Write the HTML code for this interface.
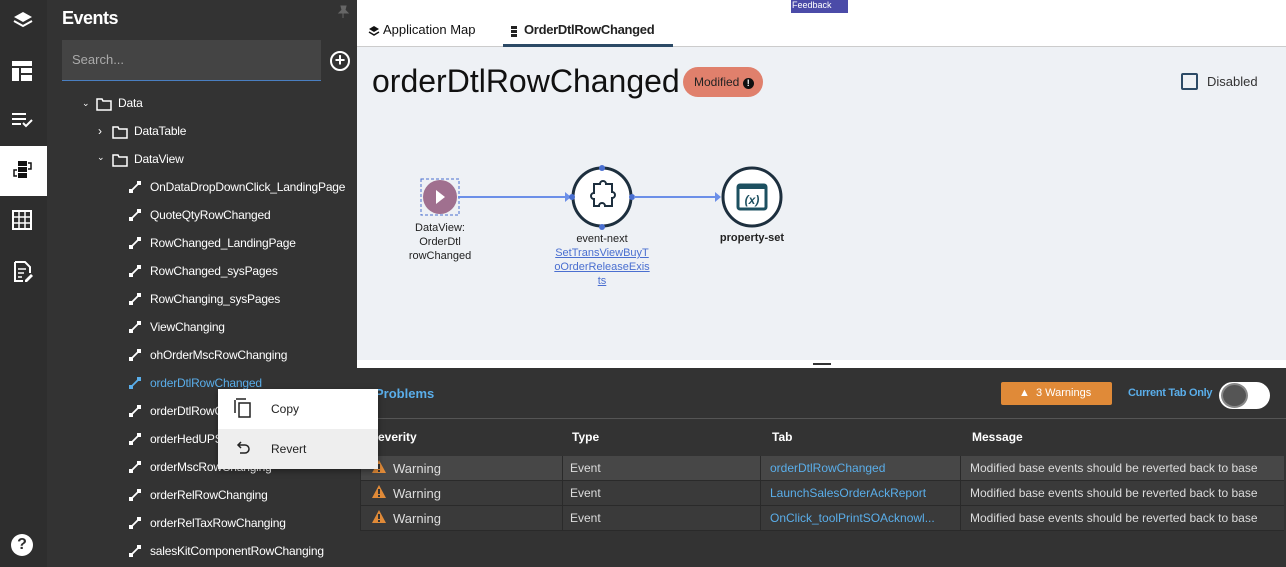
<!DOCTYPE html>
<html><head><style>
*{margin:0;padding:0;box-sizing:border-box}
html,body{width:1286px;height:567px;overflow:hidden;background:#eef1f5}
body{position:relative;font-family:"Liberation Sans",sans-serif}
.abs{position:absolute}
.rail{left:0;top:0;width:47px;height:567px;background:#2e2e2e}
.panel{left:47px;top:0;width:310px;height:567px;background:#333}
.tree div{position:absolute;color:#fff;font-size:12px;height:16px;line-height:16px;letter-spacing:-0.2px}
.lnk{position:absolute;width:12px;height:12px}
.top{left:357px;top:0;width:929px;height:47px;background:#fff;border-bottom:1px solid #ccc}
.bottom{left:357px;top:368px;width:929px;height:199px;background:#333}
.cell{position:absolute;font-size:12px;color:#ddd;line-height:24px;padding-left:10px}
</style></head><body>
<div class="abs" style="left:357px;top:47px;width:929px;height:313px;background:#eef1f5"></div>
<div class="abs rail"></div>
<svg class="abs" style="left:12px;top:10px" width="22" height="22" viewBox="0 0 22 22"><path d="M11 2 L20 7 L11 12 L2 7Z" fill="#fff"/><path d="M2 11 L11 16 L20 11" stroke="#fff" stroke-width="2" fill="none"/></svg>
<svg class="abs" style="left:12px;top:61px" width="20" height="20"><rect x="0" y="0" width="20" height="5" fill="#fff"/><rect x="0" y="7" width="7" height="13" fill="#fff"/><rect x="9" y="7" width="11" height="5" fill="#fff"/><rect x="9" y="14" width="11" height="6" fill="#fff"/></svg>
<svg class="abs" style="left:12px;top:113px" width="22" height="16"><rect x="0" y="0" width="14" height="2" fill="#fff"/><rect x="0" y="5" width="14" height="2" fill="#fff"/><rect x="0" y="10" width="9" height="2" fill="#fff"/><path d="M11 10 l3 3 l6-6" stroke="#fff" stroke-width="2" fill="none"/></svg>
<div class="abs" style="left:0;top:146px;width:47px;height:50px;background:#fff"></div>
<svg class="abs" style="left:12px;top:159px" width="22" height="22"><rect x="6" y="2" width="9" height="5" fill="#111"/><rect x="6" y="8" width="9" height="5" fill="#111"/><rect x="6" y="14" width="9" height="5" fill="#111"/><path d="M16 4 h3 v6 h-3 M5 11 h-3 v6 h3" stroke="#111" stroke-width="1.5" fill="none"/></svg>
<svg class="abs" style="left:12px;top:210px" width="20" height="20"><rect x="1" y="1" width="18" height="18" fill="none" stroke="#fff" stroke-width="2"/><path d="M1 7h18M1 13h18M7 1v18M13 1v18" stroke="#fff" stroke-width="1.5"/></svg>
<svg class="abs" style="left:13px;top:261px" width="20" height="22"><path d="M2 1h10l5 5v6M2 1v19h8" stroke="#fff" stroke-width="2" fill="none"/><path d="M5 8h8M5 12h6M5 16h4" stroke="#fff" stroke-width="1.5"/><path d="M12 19l6-6 2 2-6 6h-2z" fill="#fff"/></svg>
<div class="abs" style="left:11px;top:534px;width:22px;height:22px;border-radius:50%;background:#fff;color:#2e2e2e;font-weight:bold;font-size:16px;text-align:center;line-height:22px">?</div>

<div class="abs panel"></div>
<div class="abs" style="left:62px;top:8px;color:#fff;font-size:18px;font-weight:bold;letter-spacing:-0.5px">Events</div>
<svg class="abs" style="left:336px;top:5px" width="14" height="14"><path d="M5 1h5l-1 4 3 3H3l3-3z M7 8v5" fill="#666" stroke="#666"/></svg>
<div class="abs" style="left:62px;top:40px;width:259px;height:41px;background:#444;border-bottom:1px solid #4a7fc1;color:#aaa;font-size:13px;line-height:40px;padding-left:10px">Search...</div>
<div class="abs" style="left:330px;top:51px;width:20px;height:20px;border:2px solid #fff;border-radius:50%;color:#fff;font-size:18px;line-height:15px;text-align:center;font-weight:bold">+</div>

<div class="tree">
<div style="left:82px;top:95px;font-size:9px">&#8964;</div>
<svg class="abs" style="left:96px;top:98px" width="16" height="13"><path d="M1 1h5l1 2h8v9H1z" fill="none" stroke="#fff" stroke-width="1.5"/></svg>
<div style="left:118px;top:95px">Data</div>
<div style="left:98px;top:123px">&#8250;</div>
<svg class="abs" style="left:112px;top:126px" width="16" height="13"><path d="M1 1h5l1 2h8v9H1z" fill="none" stroke="#fff" stroke-width="1.5"/></svg>
<div style="left:134px;top:123px">DataTable</div>
<div style="left:97px;top:149px;font-size:9px">&#8964;</div>
<svg class="abs" style="left:112px;top:154px" width="16" height="13"><path d="M1 1h5l1 2h8v9H1z" fill="none" stroke="#fff" stroke-width="1.5"/></svg>
<div style="left:134px;top:151px">DataView</div>
</div>
<div id="items" class="tree"></div>

<div class="abs top"></div>
<div class="abs" style="left:791px;top:0;width:57px;height:13px;background:#4b4ba8;color:#fff;font-size:9px;line-height:10px;padding-left:1px">Feedback</div>
<svg class="abs" style="left:368px;top:25px" width="12" height="12"><path d="M6 1l5 3-5 3-5-3z" fill="#111"/><path d="M1 7l5 3 5-3" stroke="#111" stroke-width="1.5" fill="none"/></svg>
<div class="abs" style="left:383px;top:22px;font-size:13px;color:#111">Application Map</div>
<svg class="abs" style="left:509px;top:25px" width="10" height="12"><rect x="2" y="1" width="6" height="3" fill="#222"/><rect x="2" y="5" width="6" height="3" fill="#222"/><rect x="2" y="9" width="6" height="3" fill="#222"/></svg>
<div class="abs" style="left:524px;top:22px;font-size:13px;color:#222;font-weight:bold;letter-spacing:-0.3px">OrderDtlRowChanged</div>
<div class="abs" style="left:503px;top:44px;width:170px;height:3px;background:#2c4a66"></div>

<div class="abs" style="left:372px;top:63px;font-size:32px;color:#111">orderDtlRowChanged</div>
<div class="abs" style="left:683px;top:67px;width:80px;height:30px;border-radius:15px;background:#e0806c;color:#222;font-size:12px;line-height:30px;padding-left:11px">Modified <span style="display:inline-block;width:11px;height:11px;border-radius:50%;background:#111;color:#fff;font-size:9px;line-height:11px;text-align:center;font-weight:bold">!</span></div>
<div class="abs" style="left:1181px;top:73px;width:17px;height:17px;border:2px solid #2c4a66;border-radius:2px"></div>
<div class="abs" style="left:1207px;top:74px;font-size:13px;color:#333">Disabled</div>

<svg class="abs" style="left:400px;top:160px" width="400" height="130">
<rect x="21" y="19" width="38" height="36" fill="none" stroke="#4a6fd0" stroke-dasharray="3,2"/>
<circle cx="40" cy="37" r="17" fill="#a0708f"/><path d="M36 30l9 7-9 7z" fill="#fff"/>
<line x1="58" y1="37" x2="168" y2="37" stroke="#6b8fe8" stroke-width="2"/><path d="M165 32l6 5-6 5z" fill="#6b8fe8"/>
<circle cx="202" cy="37" r="29" fill="#fff" stroke="#1d2f3e" stroke-width="3"/>
<path d="M194 24h6a3 3 0 016 0h6v8a3 3 0 010 6v8h-7a3 3 0 00-6 0h-5v-7a3 3 0 010-6z" fill="none" stroke="#1d2f3e" stroke-width="2"/>
<circle cx="202" cy="8" r="3" fill="#4a6fd0"/><circle cx="202" cy="67" r="3" fill="#4a6fd0"/><circle cx="172" cy="37" r="3" fill="#4a6fd0"/><circle cx="232" cy="37" r="3" fill="#4a6fd0"/>
<line x1="234" y1="37" x2="318" y2="37" stroke="#6b8fe8" stroke-width="2"/><path d="M315 32l6 5-6 5z" fill="#6b8fe8"/>
<circle cx="352" cy="37" r="29" fill="#fff" stroke="#1d2f3e" stroke-width="3"/>
<rect x="338" y="25" width="28" height="24" rx="2" fill="none" stroke="#1d5060" stroke-width="3"/>
<rect x="338" y="25" width="28" height="4" fill="#1d5060"/>
<text x="352" y="44" font-family="Liberation Sans" font-size="12" font-weight="bold" font-style="italic" text-anchor="middle" fill="#1d5060">(x)</text>
</svg>
<div class="abs" style="left:400px;top:221px;width:80px;text-align:center;font-size:11px;color:#222;line-height:14px">DataView:<br>OrderDtl<br>rowChanged</div>
<div class="abs" style="left:552px;top:232px;width:100px;text-align:center;font-size:11px;color:#222;line-height:14px">event-next<br><span style="color:#4a6fd0;text-decoration:underline">SetTransViewBuyT<br>oOrderReleaseExis<br>ts</span></div>
<div class="abs" style="left:712px;top:232px;width:80px;text-align:center;font-size:11px;color:#222;font-weight:bold">property-set</div>

<div class="abs" style="left:357px;top:360px;width:929px;height:8px;background:#fff"></div>
<div class="abs" style="left:813px;top:363px;width:18px;height:2px;background:#333"></div>

<div class="abs bottom"></div>
<div class="abs" style="left:375px;top:386px;font-size:13px;color:#5aaeea;font-weight:bold">Problems</div>
<div class="abs" style="left:1001px;top:382px;width:111px;height:23px;background:#e08a38;border-radius:2px;color:#fff;font-size:11px;line-height:23px;padding-left:18px">&#9650;&nbsp; 3 Warnings</div>
<div class="abs" style="left:1128px;top:387px;font-size:11px;color:#5aaeea;font-weight:bold;letter-spacing:-0.3px">Current Tab Only</div>
<div class="abs" style="left:1219px;top:382px;width:51px;height:27px;border-radius:14px;background:#fff"></div>
<div class="abs" style="left:1221px;top:383px;width:27px;height:25px;border-radius:50%;background:#555;border:2px solid #888"></div>
<div class="abs" style="left:357px;top:418px;width:929px;height:1px;background:#555"></div>
<div class="abs" style="left:370px;top:430px;font-size:12px;color:#fff;font-weight:bold">Severity</div>
<div class="abs" style="left:572px;top:430px;font-size:12px;color:#fff;font-weight:bold">Type</div>
<div class="abs" style="left:772px;top:430px;font-size:12px;color:#fff;font-weight:bold">Tab</div>
<div class="abs" style="left:972px;top:430px;font-size:12px;color:#fff;font-weight:bold">Message</div>
<div id="rows"></div>

<div class="abs" style="left:218px;top:389px;width:160px;height:80px;background:#fff;box-shadow:0 2px 6px rgba(0,0,0,.4)"></div>
<div class="abs" style="left:218px;top:429px;width:160px;height:40px;background:#eee"></div>
<svg class="abs" style="left:234px;top:398px" width="18" height="20"><path d="M2 1h10M1 2v13" stroke="#222" stroke-width="1.5"/><rect x="5" y="5" width="11" height="14" fill="none" stroke="#222" stroke-width="1.5"/></svg>
<div class="abs" style="left:271px;top:402px;font-size:12px;color:#222">Copy</div>
<svg class="abs" style="left:235px;top:441px" width="16" height="14"><path d="M3 4h7a4 4 0 010 8H5" stroke="#222" stroke-width="1.5" fill="none"/><path d="M6 1L3 4l3 3" stroke="#222" stroke-width="1.5" fill="none"/></svg>
<div class="abs" style="left:271px;top:442px;font-size:12px;color:#222">Revert</div>

<script>
var items=["OnDataDropDownClick_LandingPage","QuoteQtyRowChanged","RowChanged_LandingPage","RowChanged_sysPages","RowChanging_sysPages","ViewChanging","ohOrderMscRowChanging","orderDtlRowChanged","orderDtlRowChanging","orderHedUPSRowChanging","orderMscRowChanging","orderRelRowChanging","orderRelTaxRowChanging","salesKitComponentRowChanging"];
var h="";items.forEach(function(t,i){var y=179+i*28;var c=i==7?"#5aaeea":"#fff";
h+='<svg class="lnk" style="left:129px;top:'+(y+2)+'px" viewBox="0 0 12 12"><rect x="0" y="8" width="4" height="4" fill="'+c+'"/><rect x="8" y="0" width="4" height="4" fill="'+c+'"/><line x1="2" y1="10" x2="10" y2="2" stroke="'+c+'" stroke-width="1.8"/></svg><div style="left:150px;top:'+y+'px;color:'+c+'">'+t+'</div>';});
document.getElementById("items").innerHTML=h;
var rows=["orderDtlRowChanged","LaunchSalesOrderAckReport","OnClick_toolPrintSOAcknowl..."];var r="";
rows.forEach(function(t,i){var y=456+i*25;var bg=i==0?"#474747":"#3a3a3a";
r+='<div class="abs" style="left:360px;top:'+y+'px;width:924px;height:24px;background:'+bg+'"></div>';
[360,562,760,960].forEach(function(x){r+='<div class="abs" style="left:'+x+'px;top:'+y+'px;width:1px;height:24px;background:#2a2a2a"></div>'});
r+='<div class="abs" style="left:360px;top:'+(y+24)+'px;width:924px;height:1px;background:#2a2a2a"></div>';
r+='<svg class="abs" style="left:371px;top:'+(y+3)+'px" width="16" height="15"><path d="M8 1l7 13H1z" fill="#e08a38"/><rect x="7" y="5" width="2" height="5" fill="#333"/><rect x="7" y="11" width="2" height="2" fill="#333"/></svg>';
r+='<div class="cell" style="left:383px;top:'+(y+1)+'px;font-size:13px">Warning</div><div class="cell" style="left:560px;top:'+y+'px">Event</div><div class="cell" style="left:760px;top:'+y+'px;color:#5aaeea">'+t+'</div><div class="cell" style="left:960px;top:'+y+'px">Modified base events should be reverted back to base</div>';});
document.getElementById("rows").innerHTML=r;
</script>
</body></html>
